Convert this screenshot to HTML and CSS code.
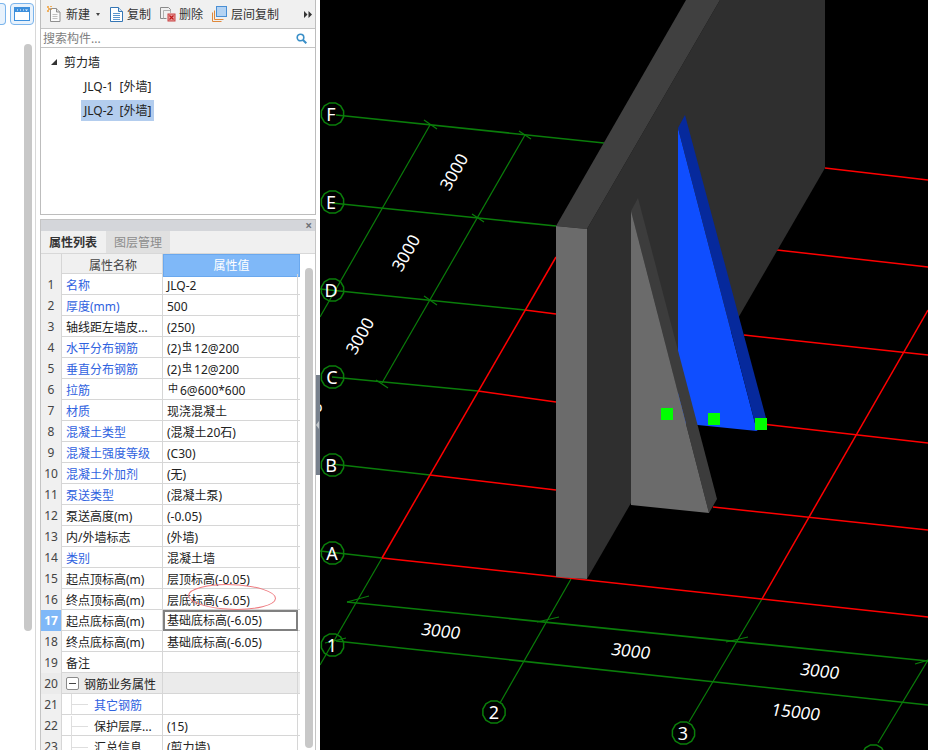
FILE: index.html
```html
<!DOCTYPE html>
<html lang="zh-CN">
<head>
<meta charset="utf-8">
<title>属性列表</title>
<link rel="stylesheet" href="styles.css">
</head>
<body>
<div class="app">
  <aside class="rail">
    <div class="rail-buttons">
      <span class="rail-btn rail-btn-cut"></span>
      <span class="rail-btn">
        <svg width="16" height="14" viewBox="0 0 16 14"><rect x="0.5" y="0.5" width="15" height="13" fill="#fff" stroke="#3d8fdc"/><rect x="1" y="1" width="14" height="4" fill="#3d8fdc"/><path d="M3 3h1M6 3h1M9 3h1" stroke="#fff"/><path d="M11 2.5h3l-1.500 1.500z" fill="#fff"/></svg>
      </span>
    </div>
    <div class="rail-thumb"></div>
  </aside>

  <main class="side">
    <section class="tree-panel">
      <div class="toolbar">
        <span class="tool tool-new">
          <svg width="15" height="16" viewBox="0 0 15 16"><path d="M3.500 2.500h6l3.500 3.500v9.500h-9.500z" fill="#fafafa" stroke="#8f8f8f"/><path d="M9.500 2.500v3.500h3.500" fill="#ddd" stroke="#8f8f8f"/><path d="M5.500 8.500h5M5.500 10.500h5M5.500 12.500h5" stroke="#c0c0c0"/><path d="M0 1h2M3 0h2M1 3h2M4 3h1M0 5h2" stroke="#f09a30" stroke-width="1.500"/></svg>
          新建
        </span>
        <span class="tool-caret"></span>
        <span class="tool tool-copy">
          <svg width="13" height="16" viewBox="0 0 13 16"><path d="M0.500 1.500h8l4 4v10h-12z" fill="#fff" stroke="#3576b5"/><path d="M8.500 1.500v4h4" fill="#cfe2f5" stroke="#3576b5"/><path d="M3 7.500h7M3 9.500h7M3 11.500h7M3 13.500h7" stroke="#5a94cc"/></svg>
          复制
        </span>
        <span class="tool tool-del">
          <svg width="16" height="16" viewBox="0 0 16 16"><path d="M0.500 1.500h8l2 2v3" fill="none" stroke="#8a8a8a"/><path d="M0.500 1.500v11h6" fill="none" stroke="#8a8a8a"/><path d="M3.500 4.500h7v2M3.500 4.500v8" fill="none" stroke="#b0b0b0"/><rect x="8" y="8" width="7" height="7" fill="#e8a0a0" stroke="#c94040"/><path d="M9.500 9.500l4 4M13.500 9.500l-4 4" stroke="#c01818" stroke-width="1.200"/></svg>
          删除
        </span>
        <span class="tool tool-floor">
          <svg width="15" height="16" viewBox="0 0 15 16"><path d="M0.500 6.500v9h9M2.500 4.500v9h9" fill="none" stroke="#e0883a"/><rect x="4.500" y="0.500" width="10" height="10" fill="#b4d3f3" stroke="#4a8fd4"/></svg>
          层间复制
        </span>
        <span class="tool-more">
          <svg width="8" height="7" viewBox="0 0 8 7"><path d="M0 0l3.500 3.500-3.500 3.500zM4.500 0l3.500 3.500-3.500 3.500z" fill="#333"/></svg>
        </span>
      </div>
      <div class="search">
        <span class="search-text">搜索构件...</span>
        <svg width="11" height="11" viewBox="0 0 11 11"><circle cx="4.500" cy="4.500" r="3.300" fill="none" stroke="#3a8fc8" stroke-width="1.600"/><path d="M7 7l3.300 3.300" stroke="#3a8fc8" stroke-width="2"/></svg>
      </div>
      <div class="tree">
        <div class="tree-root"><span class="tree-arrow"></span>剪力墙</div>
        <div class="tree-item"><span class="tree-label">JLQ-1 [外墙]</span></div>
        <div class="tree-item"><span class="tree-label tree-selected">JLQ-2 [外墙]</span></div>
      </div>
    </section>

    <section class="prop-panel">
      <div class="prop-head"><span class="prop-close">×</span></div>
      <div class="tabs">
        <span class="tab tab-active">属性列表</span>
        <span class="tab">图层管理</span>
      </div>
      <div class="prop-body">
        <div class="grid-wrap">
          <div class="row row-header"><span class="c-i"></span><span class="c-n">属性名称</span><span class="c-v">属性值</span></div>
          <div class="row"><span class="c-i">1</span><span class="c-n link">名称</span><span class="c-v">JLQ-2</span></div>
          <div class="row"><span class="c-i">2</span><span class="c-n link">厚度(mm)</span><span class="c-v">500</span></div>
          <div class="row"><span class="c-i">3</span><span class="c-n">轴线距左墙皮...</span><span class="c-v">(250)</span></div>
          <div class="row"><span class="c-i">4</span><span class="c-n link">水平分布钢筋</span><span class="c-v">(2)<small class="rebar">虫</small>12@200</span></div>
          <div class="row"><span class="c-i">5</span><span class="c-n link">垂直分布钢筋</span><span class="c-v">(2)<small class="rebar">虫</small>12@200</span></div>
          <div class="row"><span class="c-i">6</span><span class="c-n link">拉筋</span><span class="c-v"><small class="rebar">中</small>6@600*600</span></div>
          <div class="row"><span class="c-i">7</span><span class="c-n link">材质</span><span class="c-v">现浇混凝土</span></div>
          <div class="row"><span class="c-i">8</span><span class="c-n link">混凝土类型</span><span class="c-v">(混凝土20石)</span></div>
          <div class="row"><span class="c-i">9</span><span class="c-n link">混凝土强度等级</span><span class="c-v">(C30)</span></div>
          <div class="row"><span class="c-i">10</span><span class="c-n link">混凝土外加剂</span><span class="c-v">(无)</span></div>
          <div class="row"><span class="c-i">11</span><span class="c-n link">泵送类型</span><span class="c-v">(混凝土泵)</span></div>
          <div class="row"><span class="c-i">12</span><span class="c-n">泵送高度(m)</span><span class="c-v">(-0.05)</span></div>
          <div class="row"><span class="c-i">13</span><span class="c-n">内/外墙标志</span><span class="c-v">(外墙)</span></div>
          <div class="row"><span class="c-i">14</span><span class="c-n link">类别</span><span class="c-v">混凝土墙</span></div>
          <div class="row"><span class="c-i">15</span><span class="c-n">起点顶标高(m)</span><span class="c-v">层顶标高(-0.05)</span></div>
          <div class="row"><span class="c-i">16</span><span class="c-n">终点顶标高(m)</span><span class="c-v">层底标高(-6.05)</span></div>
          <div class="row row-current"><span class="c-i">17</span><span class="c-n">起点底标高(m)</span><span class="c-v">基础底标高(-6.05)</span></div>
          <div class="row"><span class="c-i">18</span><span class="c-n">终点底标高(m)</span><span class="c-v">基础底标高(-6.05)</span></div>
          <div class="row"><span class="c-i">19</span><span class="c-n">备注</span><span class="c-v"></span></div>
          <div class="row row-group"><span class="c-i">20</span><span class="c-n"><span class="expander"></span>钢筋业务属性</span><span class="c-v"></span></div>
          <div class="row row-child"><span class="c-i">21</span><span class="c-n link"><span class="branch"></span>其它钢筋</span><span class="c-v"></span></div>
          <div class="row row-child"><span class="c-i">22</span><span class="c-n"><span class="branch"></span>保护层厚...</span><span class="c-v">(15)</span></div>
          <div class="row row-child"><span class="c-i">23</span><span class="c-n"><span class="branch"></span>汇总信息</span><span class="c-v">(剪力墙)</span></div>
        </div>
        <div class="prop-scroll"><div class="prop-thumb"></div></div>
      </div>
      <svg class="markup" width="90" height="28" viewBox="0 0 90 28"><ellipse cx="45" cy="14" rx="43.500" ry="12.300" transform="rotate(2 45 14)" fill="none" stroke="#ee7b80"/></svg>
    </section>
  </main>

  <div class="splitter"><span class="splitter-arrow"></span></div>

  <div class="viewport">
    <svg class="scene" width="608" height="750" viewBox="320 0 608 750">
      <defs>
        <polygon id="ring" points="11.100,3 8.100,8.100 3,11.100 -3,11.100 -8.100,8.100 -11.100,3 -11.100,-3 -8.100,-8.100 -3,-11.100 3,-11.100 8.100,-8.100 11.100,-3" fill="none" stroke="#0a7d0a" stroke-width="1.500"/>
      </defs>

      <g class="g-line">
        <path class="heavy" d="M336 115L604 143"/>
        <path class="heavy" d="M332 203L556 226"/>
        <path class="heavy" d="M320 289L525 310"/>
        <path class="heavy" d="M332 377L478 391"/>
        <path class="heavy" d="M332 464L430 475"/>
        <path class="heavy" d="M320 551L382 558"/>
        <path class="heavy" d="M347 602L928 661"/>
        <path class="heavy" d="M336 641L928 705"/>
        <path d="M525 135L382 383"/>
        <path d="M430 125L320 317"/>
        <path d="M382 558L320 665"/>
        <path d="M571 579L500 703"/>
        <path d="M762 599L689 722"/>
        <path d="M928 660L878 743"/>
        <path d="M424 120L437 129M519 131L531 139M472 214L484 222M424 296L437 305M376 380L388 388"/>
        <path d="M347 602L369 596M537 622L559 617M726 642L748 637M915 664L928 660M325 643L346 638"/>
      </g>

      <g class="r-line">
        <path d="M525 310L556 314"/>
        <path d="M478 391L556 402"/>
        <path d="M430 475L556 490"/>
        <path d="M382 558L928 617"/>
        <path d="M825 168L928 180"/>
        <path d="M777 250L928 267"/>
        <path d="M744 335L928 355"/>
        <path d="M761 424L928 443"/>
        <path d="M713 507L928 530"/>
        <path d="M382 558L556 257"/>
        <path d="M762 599L928 310"/>
      </g>

      <polygon points="587,229 720,0 825,0 825,168 587,579" fill="#2f2f2f"/>
      <polygon points="556,226 587,229 720,0 686,0" fill="#404040"/>
      <polygon points="556,226 587,229 587,579 556,577" fill="#6b6b6b"/>

      <polygon points="678,128 757,431 678,423" fill="#0f4eff"/>
      <polygon points="678,128 685,115 766,418 757,431" fill="#06299c"/>

      <polygon points="631,211 638,198 717,499 709,513" fill="#3c3c3c"/>
      <polygon points="631,211 709,513 631,505" fill="#6b6b6b"/>

      <g fill="#00ff00">
        <rect x="661" y="408" width="12" height="12"/>
        <rect x="708" y="413" width="12" height="12"/>
        <rect x="755" y="418" width="12" height="12"/>
      </g>

      <use href="#ring" x="332.500" y="114"/>
      <use href="#ring" x="332.500" y="202"/>
      <use href="#ring" x="332.500" y="290"/>
      <use href="#ring" x="332.500" y="377"/>
      <use href="#ring" x="332.500" y="465"/>
      <use href="#ring" x="332.500" y="553"/>
      <use href="#ring" x="332.500" y="645"/>
      <use href="#ring" x="494" y="712"/>
      <use href="#ring" x="683.500" y="733"/>
      <use href="#ring" x="873.500" y="756"/>

      <g class="axis-text">
        <text x="331" y="121">F</text>
        <text x="331" y="209">E</text>
        <text x="331" y="297">D</text>
        <text x="332" y="384">C</text>
        <text x="331" y="472">B</text>
        <text x="332" y="560">A</text>
        <text x="332" y="652">1</text>
        <text x="494" y="719">2</text>
        <text x="683" y="740">3</text>
        <text x="873" y="763">4</text>
        <text class="clipped-label" x="318" y="412">o</text>
      </g>

      <g class="dim-text">
        <text transform="translate(454 172) rotate(-60)" y="6">3000</text>
        <text transform="translate(406 253) rotate(-60)" y="6">3000</text>
        <text transform="translate(360 336) rotate(-60)" y="6">3000</text>
        <text transform="translate(441 631) rotate(6) skewX(-8)" y="6">3000</text>
        <text transform="translate(631 651) rotate(6) skewX(-8)" y="6">3000</text>
        <text transform="translate(820 671) rotate(6) skewX(-8)" y="6">3000</text>
        <text transform="translate(796 712) rotate(6) skewX(-8)" y="6">15000</text>
      </g>
    </svg>
  </div>
</div>
</body>
</html>
```
FILE: styles.css
```css
* { box-sizing: border-box; }
html, body { margin: 0; height: 100%; overflow: hidden; background: #fff; }
body { font-family: "Noto Sans", "Noto Sans CJK SC", sans-serif; font-size: 12px; color: #222; }

.app { display: flex; width: 928px; height: 750px; overflow: hidden; }

.rail { position: relative; flex: 0 0 40px; padding-right: 4px; }
.rail-buttons { display: flex; gap: 4px; padding-top: 3px; height: 100%; border-right: 1px solid #d8d8d8; width: 36px; margin-left: 0; }
.rail-btn { flex: 0 0 24px; height: 22px; display: flex; align-items: center; justify-content: center; border: 1px solid #7ab4ec; border-radius: 4px; background: #e8f2fc; }
.rail-btn-cut { flex: 0 0 6px; border-left: 0; border-radius: 0 4px 4px 0; }
.rail-thumb { position: absolute; left: 24px; top: 44px; width: 8px; height: 587px; border-radius: 4px; background: #c8c8c8; }

.side { flex: 0 0 276px; display: flex; flex-direction: column; gap: 4px; }

.tree-panel { height: 215px; border: 1px solid #bdbdbd; border-top: 0; display: flex; flex-direction: column; }
.toolbar { height: 29px; flex: none; display: flex; align-items: center; padding-left: 6px; background: #f0f0f0; border-bottom: 1px solid #c4c4c4; }
.tool { display: flex; align-items: center; gap: 4px; white-space: nowrap; color: #333; }
.tool-caret { width: 0; height: 0; margin: 1px 0 0 6px; border: 2.500px solid transparent; border-top: 3px solid #444; border-bottom: 0; }
.tool-copy { margin-left: 10px; }
.tool-del { margin-left: 9px; gap: 3px; }
.tool-floor { margin-left: 9px; }
.tool-more { margin-left: auto; margin-right: 3px; display: flex; }

.search { height: 19px; flex: none; display: flex; align-items: center; justify-content: space-between; padding: 0 8px 0 2px; border-bottom: 1px solid #c4c4c4; }
.search-text { color: #808080; }

.tree { flex: 1; padding-top: 2px; }
.tree-root { height: 24px; display: flex; align-items: center; padding-left: 10px; color: #222; }
.tree-arrow { width: 0; height: 0; margin-right: 7px; border-style: solid; border-width: 0 0 6px 6px; border-color: transparent transparent #333 transparent; }
.tree-item { height: 24px; display: flex; align-items: center; padding-left: 40px; }
.tree-label { padding: 0 3px; height: 21px; line-height: 21px; white-space: nowrap; word-spacing: 3px; }
.tree-selected { background: #b3cdee; padding-right: 3px; }

.prop-panel { position: relative; flex: 1; min-height: 0; border: 1px solid #c4c4c4; border-bottom: 0; display: flex; flex-direction: column; }
.prop-head { height: 11px; flex: none; display: flex; justify-content: flex-end; align-items: center; padding-right: 3px; background: #d4d6da; }
.prop-close { color: #6f7278; font-size: 12px; line-height: 11px; font-weight: 700; }
.tabs { height: 23px; flex: none; display: flex; gap: 1px; background: #f0f0f0; border-bottom: 1px solid #d8d8d8; }
.tab { width: 64px; display: flex; align-items: center; justify-content: center; background: #e0e0e0; color: #8c8c8c; }
.tab-active { background: #f0f0f0; color: #333; font-weight: 700; }

.prop-body { display: flex; flex: 1; min-height: 0; overflow: hidden; }
.grid-wrap { flex: 0 0 258px; }
.row { display: grid; grid-template-columns: 21px 101px 135px; height: 21px; line-height: 20px; border-bottom: 1px solid #d6d6d6; white-space: nowrap; }
.c-i { text-align: center; background: #f0f0f0; color: #444; border-right: 1px solid #d6d6d6; padding-top: 1px; }
.c-n { padding: 2px 0 0 4px; border-right: 1px solid #d6d6d6; overflow: hidden; display: flex; align-items: center; }
.c-v { padding: 2px 0 0 4px; border-right: 1px solid #d6d6d6; display: flex; align-items: center; }
.link { color: #2f62e0; }
.rebar { font-size: 10px; margin: 0 2px 0 1px; position: relative; top: -3px; }

.row-header { height: 20px; background: #f0f0f0; grid-template-columns: 21px 101px 137px; }
.row-header .c-n { justify-content: center; color: #444; padding: 1px 0 0 2px; }
.row-header .c-v { justify-content: center; color: #fff; background: #7fb8f8; padding: 1px 0 0 0; border: 1px solid #6aa8ee; }

.row-current .c-i { background: #7fb8f8; color: #fff; font-weight: 700; }
.row-current .c-v { border: 2px solid #808080; padding: 1px 0 0 2px; height: 21px; }

.row-group, .row-group .c-i { background: #ebebeb; }
.expander { position: relative; width: 13px; height: 13px; margin: -2px 5px 0 0; flex: none; border: 1px solid #8a8a8a; border-radius: 2px; background: #fff; }
.expander::after { content: ""; position: absolute; left: 2px; right: 2px; top: 5px; height: 1px; background: #444; }
.row-child .c-n { padding-left: 9px; }
.branch { position: relative; flex: none; width: 23px; height: 21px; margin: -2px 0 0; border-left: 1px solid #dedede; }
.branch::after { content: ""; position: absolute; left: 0; top: 10px; width: 16px; height: 1px; background: #dedede; }

.prop-scroll { position: relative; flex: 1; }
.prop-thumb { position: absolute; left: 5px; top: 14px; width: 8px; height: 480px; border-radius: 4px; background: #c8c8c8; }

.markup { position: absolute; left: 146px; top: 363px; pointer-events: none; }

.splitter { position: relative; flex: 0 0 4px; }
.splitter::before { content: ""; position: absolute; left: 0; top: 375px; width: 4px; height: 100px; background: #77808c; }
.splitter-arrow { position: absolute; left: 0; top: 421px; width: 0; height: 0; border-style: solid; border-width: 4px 3px 4px 0; border-color: transparent #c4c8cc transparent transparent; }

.viewport { flex: 1; background: #000; overflow: hidden; }
.scene { display: block; }
.g-line path { stroke: #0a7d0a; stroke-width: 1.200; fill: none; }
.g-line path.heavy { stroke-width: 1.600; }
.r-line path { stroke: #ff0000; stroke-width: 1.500; fill: none; }
.axis-text text { font-family: "Noto Sans", sans-serif; font-size: 18px; fill: #fff; text-anchor: middle; }
.axis-text text.clipped-label { font-size: 15px; }
.dim-text text { font-family: "Noto Sans", sans-serif; font-size: 17px; fill: #fff; text-anchor: middle; }
```
